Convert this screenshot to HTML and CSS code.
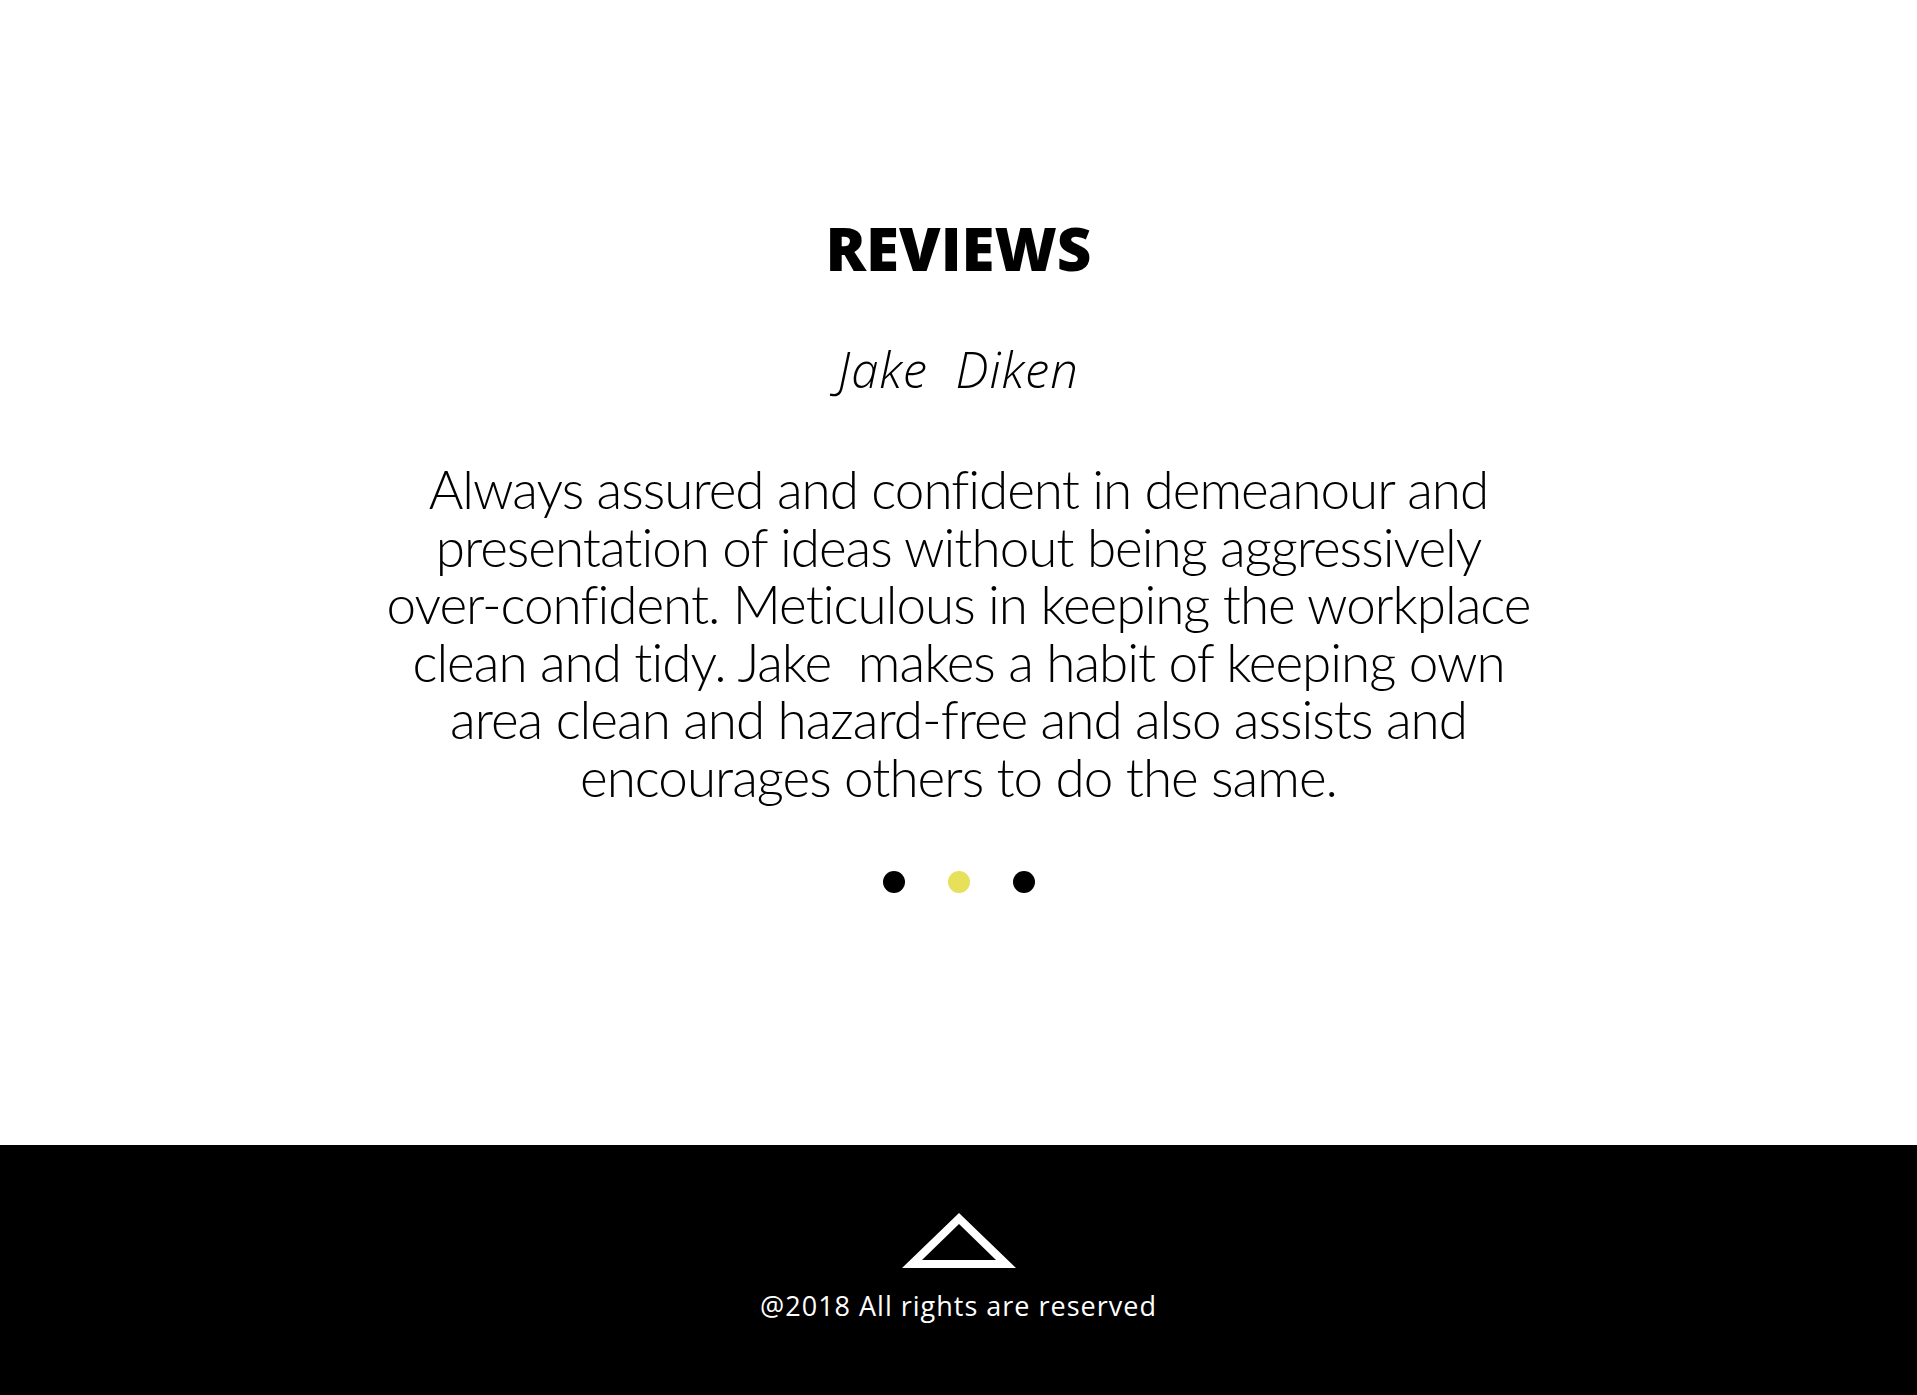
FILE: index.html
```html
<!DOCTYPE html>
<html lang="en">
<head>
<meta charset="utf-8">
<title>Reviews</title>
<link rel="stylesheet" href="styles.css">
</head>
<body>
<main class="reviews">
  <h1 class="reviews-title">REVIEWS</h1>
  <p class="reviewer">Jake&nbsp; Diken</p>
  <p class="review-text">Always assured and confident in demeanour and<br>presentation of ideas without being aggressively<br>over-confident. Meticulous in keeping the workplace<br>clean and tidy. Jake&nbsp; makes a habit of keeping own<br>area clean and hazard-free and also assists and<br>encourages others to do the same.</p>
  <div class="dots">
    <span class="dot"></span>
    <span class="dot dot-active"></span>
    <span class="dot"></span>
  </div>
</main>
<footer class="footer">
  <svg class="footer-logo" width="114" height="55" viewBox="0 0 114 55" aria-hidden="true">
    <path fill="#fff" fill-rule="evenodd" d="M57 0 L114 55 L0 55 Z M57 11 L20 47 L94 47 Z"/>
  </svg>
  <p class="copyright">@2018 All rights are reserved</p>
</footer>
</body>
</html>
```
FILE: styles.css
```css
html, body {
  margin: 0;
  padding: 0;
  background: #fff;
}

body {
  font-family: "Lato", "Open Sans", sans-serif;
  color: #000;
}

.reviews {
  height: 1145px;
  box-sizing: border-box;
  padding-top: 212px;
  display: flex;
  flex-direction: column;
  align-items: center;
  text-align: center;
}

.reviews-title {
  margin: 0;
  font-family: "Open Sans", sans-serif;
  font-weight: 800;
  font-size: 60px;
  line-height: 72px;
}

.reviewer {
  margin: 56px 0 0;
  font-family: "Open Sans", sans-serif;
  font-style: italic;
  font-weight: 300;
  font-size: 49px;
  line-height: 58px;
  letter-spacing: 1px;
}

.review-text {
  margin: 62px 0 0;
  font-family: "Lato", sans-serif;
  font-weight: 300;
  font-size: 53px;
  line-height: 57.5px;
  letter-spacing: -1px;
}

.dots {
  margin-top: 66px;
  display: flex;
  gap: 43px;
}

.dot {
  width: 22px;
  height: 22px;
  border-radius: 50%;
  background: #000;
}

.dot-active {
  background: #e6e05a;
}

.footer {
  height: 250px;
  background: #000;
  display: flex;
  flex-direction: column;
  align-items: center;
  padding-top: 68px;
  box-sizing: border-box;
}

.footer-logo {
  display: block;
}

.copyright {
  margin: 21px 0 0;
  color: #fff;
  font-family: "Open Sans", sans-serif;
  font-weight: 400;
  font-size: 27px;
  line-height: 34px;
  letter-spacing: 1px;
}
```
